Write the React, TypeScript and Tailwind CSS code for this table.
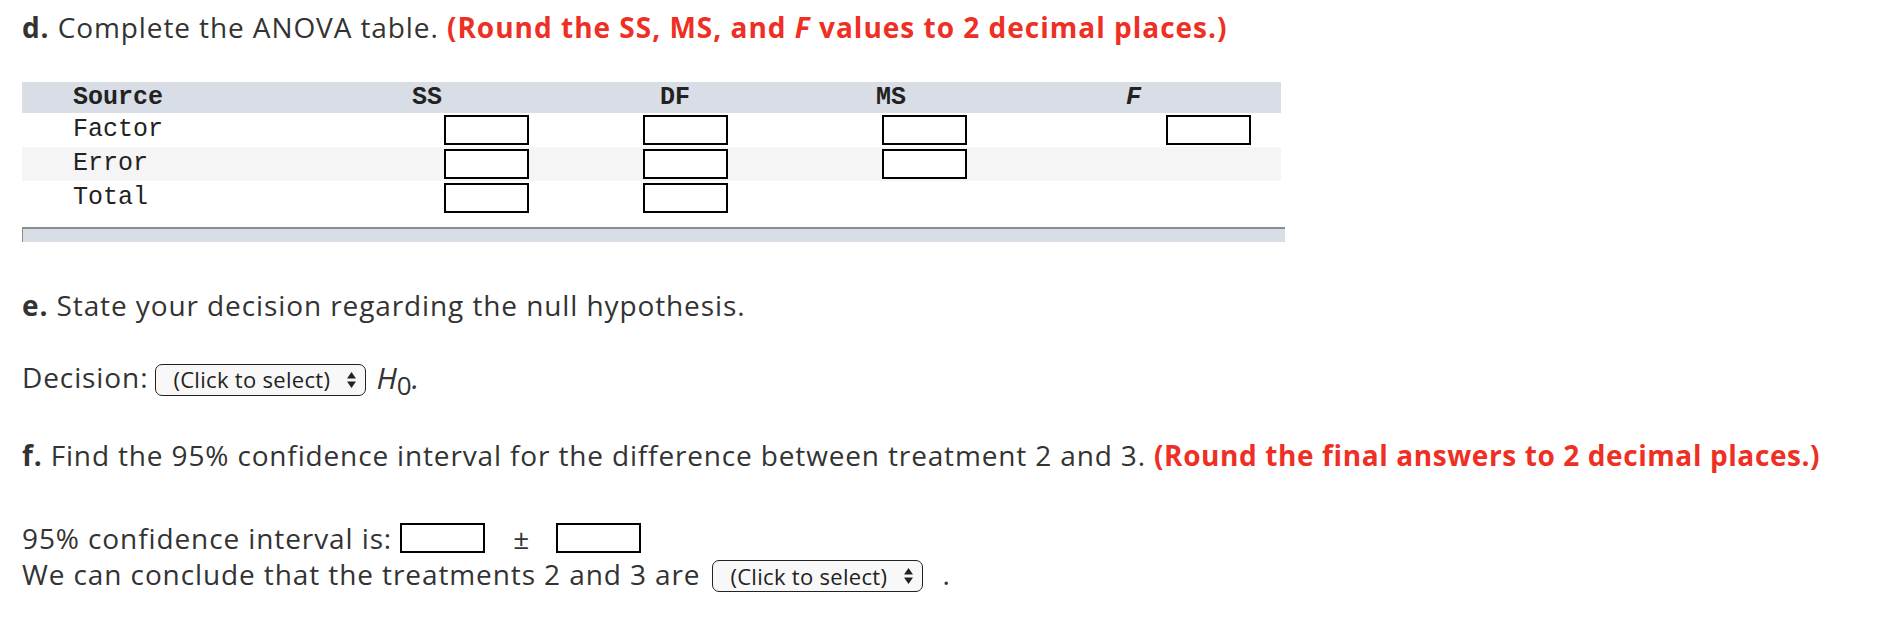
import React from 'react';

const body = "font-['Open_Sans','Liberation_Sans',sans-serif]";
const mono = "font-['Liberation_Mono','Courier_New',monospace]";

function Box() {
  return <div className="w-[85px] h-[30px] border-2 border-black bg-white shrink-0" />;
}

function Blank() {
  return <div className="w-[85px] h-[30px] shrink-0" />;
}

// Fake native select with the stacked up/down arrows
function Picker() {
  return (
    <div className="inline-flex items-center h-[32px] w-[211px] rounded-[7px] border border-[#222] bg-[#f8f8f8] pl-[17px] pr-[8px] text-[22px] tracking-[0.3px] text-[#222]">
      <span className="flex-1">(Click to select)</span>
      <svg width="11" height="18" viewBox="0 0 11 18">
        <path d="M5.5 1 L10 7.5 L1 7.5 Z" fill="#222" />
        <path d="M5.5 17 L10 10.5 L1 10.5 Z" fill="#222" />
      </svg>
    </div>
  );
}

export default function App() {
  return (
    <div className={`${body} w-[1898px] h-[638px] bg-white text-[#333] text-[28px] tracking-[0.9px] px-[22px] pt-[10px]`}>
      {/* d. ANOVA table */}
      <p className="leading-[34px]">
        <b>d.</b> Complete the ANOVA table.{' '}
        <b className="text-[#ee2f24] tracking-[1px]">
          (Round the SS, MS, and <i>F</i> values to 2 decimal places.)
        </b>
      </p>

      <div className={`${mono} mt-[38px] w-[1259px] text-[25px] tracking-normal text-[#222]`}>
        <div className="flex items-center h-[31px] bg-[#d9dde5] font-bold">
          <span className="w-[390px] pl-[51px]">Source</span>
          <span className="w-[248px]">SS</span>
          <span className="w-[216px]">DF</span>
          <span className="w-[250px]">MS</span>
          <span className="italic">F</span>
        </div>
        {[
          { label: 'Factor', cells: [true, true, true, true], bg: 'bg-white' },
          { label: 'Error', cells: [true, true, true, false], bg: 'bg-[#f5f5f5]' },
          { label: 'Total', cells: [true, true, false, false], bg: 'bg-white' },
        ].map((r) => (
          <div key={r.label} className={`flex items-center h-[34px] ${r.bg}`}>
            <span className="w-[422px] pl-[51px] shrink-0">{r.label}</span>
            {r.cells[0] ? <Box /> : <Blank />}
            <div className="w-[114px] shrink-0" />
            {r.cells[1] ? <Box /> : <Blank />}
            <div className="w-[154px] shrink-0" />
            {r.cells[2] ? <Box /> : <Blank />}
            <div className="w-[199px] shrink-0" />
            {r.cells[3] ? <Box /> : <Blank />}
          </div>
        ))}
        <div className="mt-[12px] h-[15px] w-[1263px] bg-[#d9dde5] border-t-2 border-l border-[#8c8c8c]" />
      </div>

      {/* e. decision */}
      <p className="mt-[46px] leading-[34px]">
        <b>e.</b> State your decision regarding the null hypothesis.
      </p>
      <div className="mt-[38px] flex items-center h-[34px]">
        <span>Decision:</span>
        <span className="ml-[7px]"><Picker /></span>
        <span className="ml-[10px] italic tracking-normal text-[30px]">
          H<sub className="not-italic text-[26px]">0</sub>.
        </span>
      </div>

      {/* f. confidence interval */}
      <p className="mt-[44px] leading-[34px] tracking-[0.85px]">
        <b>f.</b> Find the 95% confidence interval for the difference between treatment 2 and 3.{' '}
        <b className="text-[#ee2f24] tracking-[0.6px]">(Round the final answers to 2 decimal places.)</b>
      </p>
      <div className="mt-[50px] flex items-center h-[32px]">
        <span>95% confidence interval is:</span>
        <span className="ml-[8px]"><Box /></span>
        <span className="ml-[28px]">±</span>
        <span className="ml-[26px]"><Box /></span>
      </div>
      <div className="mt-[1px] flex items-center h-[37px]">
        <span>We can conclude that the treatments 2 and 3 are</span>
        <span className="ml-[12px]"><Picker /></span>
        <span className="ml-[19px]">.</span>
      </div>
    </div>
  );
}
